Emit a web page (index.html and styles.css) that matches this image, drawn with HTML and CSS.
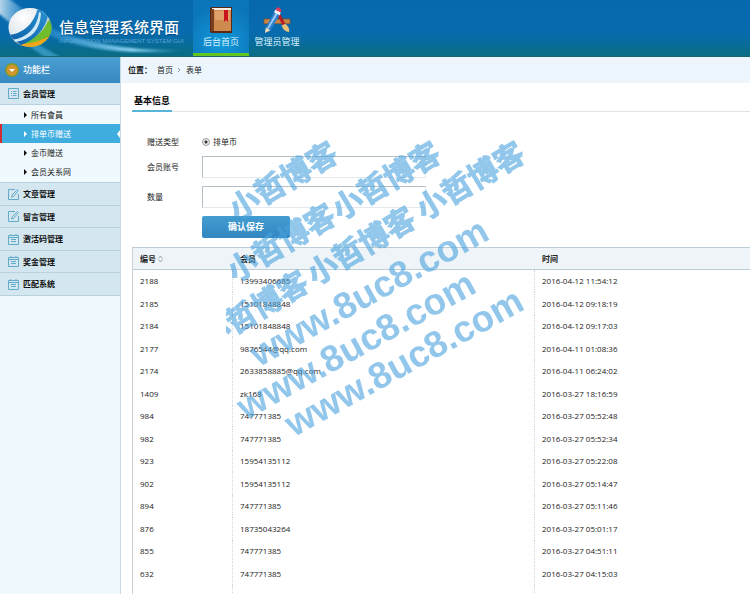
FILE: index.html
```html
<!DOCTYPE html>
<html lang="zh-CN">
<head>
<meta charset="utf-8">
<title>信息管理系统界面</title>
<link rel="stylesheet" href="styles.css">
</head>
<body>
<header class="topbar">
  <svg class="beams" viewBox="0 0 194 56" aria-hidden="true">
    <defs>
      <linearGradient id="beam" x1="0" y1="0" x2="1" y2="0"><stop offset="0" stop-color="#fff" stop-opacity=".8"/><stop offset="1" stop-color="#7fd0ff" stop-opacity=".1"/></linearGradient>
      <linearGradient id="sweep" x1="0" y1="0" x2="1" y2="0"><stop offset="0" stop-color="#4fb4ee" stop-opacity=".3"/><stop offset=".6" stop-color="#9de0ff" stop-opacity=".9"/><stop offset="1" stop-color="#7fd0ff" stop-opacity="0"/></linearGradient>
      <filter id="soft"><feGaussianBlur stdDeviation="1"/></filter>
    </defs>
    <g filter="url(#soft)">
      <path d="M-3 -2 H8 L30 14 L14 26 L-3 12Z" fill="url(#beam)"/>
      <path d="M46 26 Q100 52 190 50 Q100 58 46 34Z" fill="url(#sweep)"/>
      <path d="M30 40 L62 58 H46 L26 44Z" fill="#5dbdf0" opacity=".5"/>
    </g>
  </svg>
  <a class="brand" href="#">
    <svg class="logo" viewBox="0 0 46 42" aria-hidden="true">
      <defs>
        <radialGradient id="globe" cx=".35" cy=".25" r=".8"><stop offset="0" stop-color="#fff"/><stop offset=".6" stop-color="#dfe7ec"/><stop offset="1" stop-color="#93a9b8"/></radialGradient>
        <linearGradient id="band" x1="0" y1="1" x2="1" y2="0"><stop offset="0" stop-color="#0a5ca5"/><stop offset="1" stop-color="#2a93d3"/></linearGradient>
        <clipPath id="disc"><ellipse cx="23" cy="20.500" rx="21.500" ry="19.500"/></clipPath>
      </defs>
      <ellipse cx="23" cy="20.500" rx="21.500" ry="19.500" fill="url(#globe)"/>
      <g clip-path="url(#disc)">
        <path d="M12 42 Q36 38 42 12 L48 24 L40 44Z" fill="#69b52b"/>
        <path d="M14 34 Q32 36 46 27 L44 44 H14Z" fill="#f0a51c"/>
        <path d="M18 35 Q34 30 41 14 L46 24 Q38 34 18 37Z" fill="#70bd2d"/>
        <path d="M1 28 Q24 26 31 1 L41 9 Q36 30 14 38Z" fill="url(#band)"/>
        <path d="M5 33 Q29 29 32 5 L34 6 Q33 31 8 35Z" fill="#cfe9f7"/>
      </g>
    </svg>
    <span class="brand-text">
      <span class="brand-name">信息管理系统界面</span>
      <span class="brand-sub">INFORMATION MANAGEMENT SYSTEM GUI</span>
    </span>
  </a>
  <nav class="topnav">
    <a class="tab tab-active" href="#">
      <svg viewBox="0 0 24 26" aria-hidden="true">
        <path d="M1 2 Q1 0 3 0 H23 V26 H3 Q1 26 1 24Z" fill="#5a2814"/>
        <path d="M3 1 H22 V3 H3Z" fill="#f6eee2"/>
        <path d="M5 3 H22 V24 H5Z" fill="#cf8a50"/><path d="M6 4 H21 V13 H6Z" fill="#dfa06a"/>
        <path d="M2 2 H5 V24 H2Z" fill="#7c3f1f"/><path d="M15 3 H19 V15 L17 13 L15 15Z" fill="#c9131d"/>
      </svg>
      <span>后台首页</span>
    </a>
    <a class="tab" href="#">
      <svg viewBox="0 0 30 28" aria-hidden="true">
        <path d="M1 13 H29 V18 H1Z" fill="#c98546" stroke="#8b5123" stroke-width=".7"/>
        <path d="M13 4 L16 3 L24 18 L21 20Z" fill="#b51e22"/><path d="M20 20 L24 18 Q29 22 28 27 Q22 27 20 20Z" fill="#e9c078"/>
        <path d="M12 5 L18 8 L8 25 L3 22Z" fill="#2f80d2"/><path d="M14 6 L16 7 L6 23.500 L4.500 22.500Z" fill="#9ccff7"/><path d="M3 22 L8 25 L2 28Z" fill="#f3dcae"/>
        <path d="M13 3 L16 0 L20 3 L18 7Z" fill="#e6395c"/><path d="M13 3 L19 6 L18 9 L12 6Z" fill="#eef3f7"/>
      </svg>
      <span>管理员管理</span>
    </a>
  </nav>
</header>
<div class="layout">
  <aside class="sidebar">
    <h2 class="side-title"><svg viewBox="0 0 14 14" aria-hidden="true"><circle cx="7" cy="7" r="7" fill="#7d9a2e"/><circle cx="7" cy="7" r="5.500" fill="#d3962a"/><path d="M4 6 H10 L7 9Z" fill="#fff"/></svg>功能栏</h2>
    <a class="group" href="#"><svg viewBox="0 0 11 11"><path d="M.5 .5H10.500V10.500H.5ZM3 3.500H4M5 3.500H8.500M3 5.500H4M5 5.500H8.500M3 7.500H4M5 7.500H8.500"/></svg>会员管理</a>
    <ul class="submenu">
      <li><a href="#">所有會員</a></li>
      <li><a class="current" href="#">排单币赠送</a></li>
      <li><a href="#">金币赠送</a></li>
      <li><a href="#">会员关系网</a></li>
    </ul>
    <a class="group" href="#"><svg viewBox="0 0 11 11"><path d="M7 .5H.5V10.500H10.500V5M3.500 8L4 6L9.500 .5L10.500 1.500L5.500 7.500Z"/></svg>文章管理</a>
    <a class="group" href="#"><svg viewBox="0 0 11 11"><path d="M7 .5H.5V10.500H10.500V5M3.500 8L4 6L9.500 .5L10.500 1.500L5.500 7.500Z"/></svg>留言管理</a>
    <a class="group" href="#"><svg viewBox="0 0 11 11"><path d="M.5 1.500H10.500V10.500H.5ZM.5 3.500H10.500M3 0V2M8 0V2M3 5.500H8M3 7.500H8"/></svg>激活码管理</a>
    <a class="group" href="#"><svg viewBox="0 0 11 11"><path d="M.5 1.500H10.500V10.500H.5ZM.5 3.500H10.500M3 0V2M8 0V2M3 5.500H8M3 7.500H8"/></svg>奖金管理</a>
    <a class="group" href="#"><svg viewBox="0 0 11 11"><path d="M.5 1.500H10.500V10.500H.5ZM.5 3.500H10.500M3 0V2M8 0V2M3 5.500H8M3 7.500H8"/></svg>匹配系统</a>
  </aside>
  <main class="main">
    <nav class="crumbs"><b>位置：</b><a href="#">首页</a><svg viewBox="0 0 3 6" aria-hidden="true"><path d="M0 1L2 3L0 5" fill="none" stroke="#8a9ba5"/></svg><a href="#">表单</a></nav>
    <div class="content">
      <div class="section-head"><h1>基本信息</h1></div>
      <form class="form">
        <span class="label">赠送类型</span>
        <label class="radio"><input type="radio" name="type" checked>排单币</label>
        <label class="label" for="account">会员账号</label>
        <input class="field" id="account" type="text">
        <label class="label" for="amount">数量</label>
        <input class="field" id="amount" type="text">
        <button class="save" type="button">确认保存</button>
      </form>
      <table class="records">
        <colgroup><col class="col-id"><col class="col-member"><col></colgroup>
        <thead><tr><th>编号<svg viewBox="0 0 5 8" aria-hidden="true"><path d="M.5 3.500L2.500 1L4.500 3.500M.5 4.500L2.500 7L4.500 4.500" fill="none" stroke="#84929b" stroke-width=".8"/></svg></th><th>会员</th><th>时间</th></tr></thead>
        <tbody>
          <tr><td>2188</td><td>13993406685</td><td>2016-04-12 11:54:12</td></tr>
          <tr><td>2185</td><td>15101848848</td><td>2016-04-12 09:18:19</td></tr>
          <tr><td>2184</td><td>15101848848</td><td>2016-04-12 09:17:03</td></tr>
          <tr><td>2177</td><td>9876544@qq.com</td><td>2016-04-11 01:08:36</td></tr>
          <tr><td>2174</td><td>2633858885@qq.com</td><td>2016-04-11 06:24:02</td></tr>
          <tr><td>1409</td><td>zk168</td><td>2016-03-27 18:16:59</td></tr>
          <tr><td>984</td><td>747771385</td><td>2016-03-27 05:52:48</td></tr>
          <tr><td>982</td><td>747771385</td><td>2016-03-27 05:52:34</td></tr>
          <tr><td>923</td><td>15954135112</td><td>2016-03-27 05:22:08</td></tr>
          <tr><td>902</td><td>15954135112</td><td>2016-03-27 05:14:47</td></tr>
          <tr><td>894</td><td>747771385</td><td>2016-03-27 05:11:46</td></tr>
          <tr><td>876</td><td>18735043264</td><td>2016-03-27 05:01:17</td></tr>
          <tr><td>855</td><td>747771385</td><td>2016-03-27 04:51:11</td></tr>
          <tr><td>632</td><td>747771385</td><td>2016-03-27 04:15:03</td></tr>
          <tr class="tail"><td></td><td></td><td></td></tr>
        </tbody>
      </table>
    </div>
  </main>
</div>
<svg class="watermark" viewBox="0 0 310 310" aria-hidden="true">
  <defs><clipPath id="edge"><rect width="310" height="310"/></clipPath></defs>
  <g class="wm-name">
    <text transform="translate(56 49) rotate(-31)">小哲博客</text>
    <text transform="translate(159 49) rotate(-31)">小哲博客</text>
    <text transform="translate(243 49) rotate(-31)">小哲博客</text>
    <text transform="translate(54 111) rotate(-31)">小哲博客</text>
    <text transform="translate(134 114) rotate(-31)">小哲博客</text>
    <g clip-path="url(#edge)"><text transform="translate(27 178) rotate(-31)">小哲博客</text></g>
  </g>
  <g class="wm-url">
    <text transform="translate(143 162) rotate(-29)">www.8uc8.com</text>
    <text transform="translate(130 215) rotate(-29)">www.8uc8.com</text>
    <text transform="translate(178 232) rotate(-29)">www.8uc8.com</text>
  </g>
</svg>
</body>
</html>
```
FILE: styles.css
```css
* { box-sizing: border-box; }
body {
  margin: 0;
  position: relative;
  min-height: 100vh;
  display: flex;
  flex-direction: column;
  font: 8px/12px "Open Sans", "Noto Sans CJK SC", sans-serif;
  color: #222;
  background: #fff;
}
a { color: inherit; text-decoration: none; }
svg { flex: none; }

.topbar {
  position: relative;
  display: flex;
  height: 57px;
  background: linear-gradient(#0768ad, #076bae 60%, #086c92 85%, #0a6c84);
  border-bottom: 1px solid #1d6470;
  color: #fff;
}
.beams { position: absolute; left: 0; top: 0; width: 194px; height: 56px; }
.brand { position: relative; display: flex; width: 193px; padding: 7px 0 0 7px; gap: 6px; }
.logo { width: 46px; height: 42px; }
.brand-text { display: flex; flex-direction: column; padding-top: 10px; white-space: nowrap; }
.brand-name { font-size: 15px; line-height: 20px; font-weight: 500; text-shadow: 0 1px 1px #034a80; }
.brand-sub { font: 6px/8px "Liberation Sans", sans-serif; color: #5aa5d6; }
.topnav { display: flex; }
.tab {
  display: flex;
  flex-direction: column;
  align-items: center;
  width: 56px;
  padding-top: 7px;
  gap: 2px;
  font-size: 9px;
  line-height: 14px;
  white-space: nowrap;
  color: #d9f1fb;
}
.tab svg { width: 30px; height: 26px; }
.tab-active { background: radial-gradient(circle at 50% 80%, #1299da, #0b75b9 75%); border-bottom: 3px solid #62c522; }

.layout { display: flex; flex: 1; }
.sidebar { width: 121px; flex: none; background: #f0f9fe; border-right: 1px solid #c5dce6; }
.side-title {
  display: flex;
  align-items: center;
  gap: 4px;
  height: 26px;
  margin: 0;
  padding-left: 5px;
  background: linear-gradient(#4a9fd2, #3789c1);
  color: #fff;
  font-size: 9px;
  font-weight: 500;
}
.side-title svg { width: 14px; height: 14px; }
.group {
  display: flex;
  align-items: center;
  gap: 4px;
  height: 22px;
  padding-left: 8px;
  background: #d4e7f0;
  border-bottom: 1px solid #b7d2de;
  font-weight: 700;
  color: #111;
}
.group:nth-of-type(even) { height: 23px; }
.group svg { width: 11px; height: 11px; fill: none; stroke: #62abc9; }
.submenu { margin: 0; padding: 0 0 1px; list-style: none; border-bottom: 1px solid #b7d2de; }
.submenu a { position: relative; display: flex; align-items: center; gap: 4px; height: 19px; padding-left: 24px; }
.submenu a::before { content: ""; border: 3px solid transparent; border-left-color: #111; border-right: 0; }
.submenu .current { background: #40addf; color: #fff; border-left: 2px solid #d22c34; padding-left: 22px; }
.submenu .current::before { border-left-color: #fff; }
.submenu .current::after { content: ""; position: absolute; right: 0; top: 6px; border: 4px solid transparent; border-right: 3px solid #fff; border-left: 0; }

.main { flex: 1; min-width: 0; }
.crumbs { display: flex; align-items: center; gap: 5px; height: 26px; padding-left: 7px; background: #edf6fd; }
.crumbs svg { width: 3px; height: 6px; }
.content { padding-left: 11px; }
.section-head { display: flex; height: 29px; border-bottom: 1px solid #dfe4e7; }
.section-head h1 { margin: 0 0 -1px; padding: 11px 2px 0; font-size: 9px; line-height: 14px; border-bottom: 2px solid #58b5da; color: #000; }
.form { display: grid; grid-template-columns: 55px 224px; row-gap: 8px; padding: 24px 0 9px 15px; align-items: center; }
.radio { display: flex; align-items: center; gap: 3px; height: 12px; }
.radio input { width: 8px; height: 8px; margin: 0; appearance: none; border: 1px solid #999; border-radius: 50%; background: radial-gradient(circle, #333 0 1px, #eee 2px); }
.field { width: 100%; height: 22px; padding: 0 4px; font: inherit; background: #fff; border: 1px solid #e3e9ec; border-color: #b3bfc5 #e3e9ec #e3e9ec #b3bfc5; }
.save {
  grid-column: 2;
  width: 88px;
  height: 22px;
  padding: 0;
  border: 0;
  border-radius: 2px;
  background: linear-gradient(#439dd1, #3286c0);
  color: #fff;
  font: 700 9px/14px "Noto Sans CJK SC", sans-serif;
}

.records { width: 100%; table-layout: fixed; border-collapse: separate; border-spacing: 0; border-left: 1px solid #c6d0d6; }
.col-id { width: 100px; }
.col-member { width: 302px; }
.records th { height: 23px; padding: 0 7px; text-align: left; background: #eef4f7; border: solid #bccdd6; border-width: 1px 0; }
.records th svg { width: 5px; height: 8px; margin-left: 2px; vertical-align: middle; }
.records td { height: 22px; padding: 0 7px; border-right: 1px dotted #d5d5d5; }
.records tr:nth-child(even) td { height: 23px; }
.records td:last-child { border-right: 0; }
.records .tail td { height: 10px; }

.watermark {
  position: absolute;
  left: 226px;
  top: 130px;
  width: 310px;
  height: 310px;
  overflow: visible;
  pointer-events: none;
  fill: #4aa3df;
  stroke: #4aa3df;
  opacity: .6;
  text-anchor: middle;
}
.wm-name { font: 700 30px "Noto Sans CJK SC", sans-serif; stroke-width: 1px; }
.wm-name text { dominant-baseline: central; }
.wm-url { font: 700 37px "Liberation Sans", sans-serif; stroke-width: 0; }
.wm-url text { dominant-baseline: central; }
```
